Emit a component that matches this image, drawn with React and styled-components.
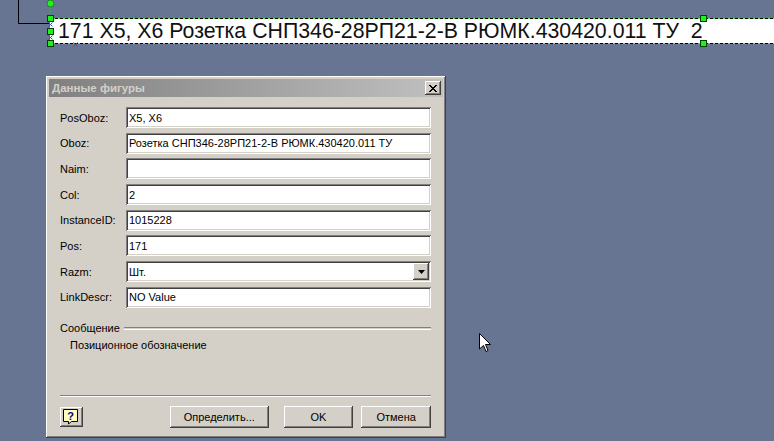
import React from 'react';
import styled, { createGlobalStyle } from 'styled-components';

const Global = createGlobalStyle`
  html, body {
    margin: 0;
    padding: 0;
    background: #687592;
    overflow: hidden;
  }
  #root {
    width: 774px;
    height: 441px;
  }
`;

const fields = [
  { label: 'PosOboz:', value: 'X5, X6' },
  { label: 'Oboz:', value: 'Розетка СНП346-28РП21-2-В РЮМК.430420.011 ТУ' },
  { label: 'Naim:', value: '' },
  { label: 'Col:', value: '2' },
  { label: 'InstanceID:', value: '1015228' },
  { label: 'Pos:', value: '171' },
  { label: 'Razm:', value: 'Шт.', combo: true },
  { label: 'LinkDescr:', value: 'NO Value' },
];

const raised = `
  box-shadow: inset -1px -1px #404040, inset 1px 1px #ffffff,
    inset -2px -2px #808080, inset 2px 2px #d4d0c8;
`;

const S = {
  Canvas: styled.div`
    position: relative;
    width: 774px;
    height: 441px;
    overflow: hidden;
    background: #687592;
    font-family: 'Liberation Sans', Arial, sans-serif;
  `,
  Marks: styled.svg`
    position: absolute;
    left: 0;
    top: 0;
    pointer-events: none;
  `,
  TextShape: styled.div`
    position: absolute;
    left: 50px;
    top: 18px;
    width: 740px;
    height: 26px;
    box-sizing: border-box;
    background: #ffffff;
    padding-left: 8px;
    font-family: 'Liberation Sans', Arial, sans-serif;
    font-size: 21.3px;
    line-height: 26px;
    color: #111;
    white-space: pre;
  `,
  Window: styled.div`
    position: absolute;
    left: 46px;
    top: 76px;
    width: 400px;
    height: 362px;
    box-sizing: border-box;
    padding: 3px;
    background: #d4d0c8;
    ${raised}
    display: flex;
    flex-direction: column;
    font-family: 'Liberation Sans', Tahoma, sans-serif;
    font-size: 11px;
    color: #000;
  `,
  TitleBar: styled.div`
    height: 18px;
    display: flex;
    align-items: center;
    justify-content: space-between;
    padding: 0 2px 0 3px;
    background: linear-gradient(90deg, #808080, #c0c0c0);
  `,
  Title: styled.span`
    color: #d4d0c8;
    font-weight: bold;
    font-size: 11.5px;
  `,
  CloseBtn: styled.div`
    width: 16px;
    height: 14px;
    background: #d4d0c8;
    ${raised}
    display: flex;
    align-items: center;
    justify-content: center;
  `,
  Body: styled.div`
    flex: 1;
    display: flex;
    flex-direction: column;
    padding: 10px 12px 7px 11px;
  `,
  Grid: styled.div`
    display: grid;
    grid-template-columns: 66px 1fr;
    row-gap: 4.7px;
    align-items: center;
  `,
  Label: styled.span`
    white-space: nowrap;
  `,
  Field: styled.div`
    position: relative;
    height: 21px;
    box-sizing: border-box;
    background: #ffffff;
    box-shadow: inset 1px 1px #808080, inset -1px -1px #ffffff,
      inset 2px 2px #404040, inset -2px -2px #d4d0c8;
    padding: 0 2px 0 3px;
    display: flex;
    align-items: center;
    justify-content: space-between;
  `,
  Arrow: styled.div`
    width: 16px;
    height: 17px;
    background: #d4d0c8;
    ${raised}
    display: flex;
    align-items: center;
    justify-content: center;
  `,
  Group: styled.div`
    margin-top: 14px;
    display: flex;
    align-items: center;
    gap: 4px;
    height: 13px;
    &::after {
      content: '';
      flex: 1;
      height: 1px;
      border-top: 1px solid #808080;
      border-bottom: 1px solid #ffffff;
    }
  `,
  Message: styled.div`
    margin-top: 4px;
    padding-left: 10px;
    height: 13px;
  `,
  Spacer: styled.div`
    flex: 1;
  `,
  Separator: styled.div`
    border-top: 1px solid #808080;
    border-bottom: 1px solid #ffffff;
  `,
  Footer: styled.div`
    margin-top: 9px;
    display: flex;
    align-items: flex-start;
  `,
  HelpBtn: styled.div`
    width: 23px;
    height: 20px;
    margin-top: 1px;
    background: #d4d0c8;
    ${raised}
    display: flex;
    align-items: center;
    justify-content: center;
  `,
  Button: styled.div`
    width: ${p => p.$w}px;
    height: 22px;
    margin-left: ${p => p.$ml}px;
    box-sizing: border-box;
    background: #d4d0c8;
    ${raised}
    display: flex;
    align-items: center;
    justify-content: center;
  `,
  Cursor: styled.svg`
    position: absolute;
    left: 479px;
    top: 333px;
  `,
};

const Handle = ({ x, y }) => (
  <rect x={x - 3} y={y - 3} width="6" height="6" fill="#22ee22" stroke="#004000" strokeWidth="1" />
);

const Cross = ({ x, y }) => (
  <g stroke="#3050c0" strokeWidth="1">
    <line x1={x - 2} y1={y - 2} x2={x + 2} y2={y + 2} />
    <line x1={x + 2} y1={y - 2} x2={x - 2} y2={y + 2} />
  </g>
);

const App = () => {
  return (
    <S.Canvas>
      <Global />
      <S.TextShape>{'171 X5, X6 Розетка СНП346-28РП21-2-В РЮМК.430420.011 ТУ  2'}</S.TextShape>
      <S.Marks width="774" height="441">
        <polyline points="18.5,0 18.5,23.5 50,23.5" fill="none" stroke="#000" strokeWidth="1" />
        <line x1="50" y1="7" x2="50" y2="15" stroke="#22cc22" strokeDasharray="2 2" />
        <circle cx="50.5" cy="3.5" r="3.5" fill="#22ee22" stroke="#208020" />
        <line x1="50" y1="18.5" x2="774" y2="18.5" stroke="#66dd66" />
        <line x1="50" y1="18.5" x2="774" y2="18.5" stroke="#000" strokeDasharray="3 2" />
        <line x1="50" y1="43.5" x2="774" y2="43.5" stroke="#66dd66" />
        <line x1="50" y1="43.5" x2="774" y2="43.5" stroke="#000" strokeDasharray="3 2" />
        <Cross x={50.5} y={24.5} />
        <Cross x={50.5} y={37.5} />
        <Cross x={75.5} y={44.5} />
        <Handle x={50.5} y={18.5} />
        <Handle x={50.5} y={31.5} />
        <Handle x={50.5} y={43.5} />
        <Handle x={703.5} y={18.5} />
        <Handle x={703.5} y={43.5} />
      </S.Marks>

      <S.Window>
        <S.TitleBar>
          <S.Title>Данные фигуры</S.Title>
          <S.CloseBtn>
            <svg width="8" height="7" viewBox="0 0 8 7">
              <path d="M0 0 L7 7 M1 0 L8 7 M7 0 L0 7 M8 0 L1 7" stroke="#000" strokeWidth="1" />
            </svg>
          </S.CloseBtn>
        </S.TitleBar>
        <S.Body>
          <S.Grid>
            {fields.map(f => (
              <React.Fragment key={f.label}>
                <S.Label>{f.label}</S.Label>
                <S.Field>
                  <span>{f.value}</span>
                  {f.combo && (
                    <S.Arrow>
                      <svg width="7" height="4" viewBox="0 0 7 4">
                        <path d="M0 0 H7 L3.5 4 Z" fill="#000" />
                      </svg>
                    </S.Arrow>
                  )}
                </S.Field>
              </React.Fragment>
            ))}
          </S.Grid>
          <S.Group>Сообщение</S.Group>
          <S.Message>Позиционное обозначение</S.Message>
          <S.Spacer />
          <S.Separator />
          <S.Footer>
            <S.HelpBtn>
              <svg width="16" height="16" viewBox="0 0 16 16">
                <path d="M0.5 0.5 H14.5 V12.5 H8.5 L5.5 15 V12.5 H0.5 Z" fill="#ffffc0" stroke="#000" />
                <text x="7.5" y="11" textAnchor="middle" fontFamily="Liberation Sans, Arial, sans-serif" fontWeight="bold" fontSize="11" fill="#000080">?</text>
              </svg>
            </S.HelpBtn>
            <S.Button $w={99} $ml={87}>Определить...</S.Button>
            <S.Button $w={70} $ml={15}>OK</S.Button>
            <S.Button $w={70} $ml={8}>Отмена</S.Button>
          </S.Footer>
        </S.Body>
      </S.Window>

      <S.Cursor width="13" height="21" viewBox="0 0 13 21">
        <path d="M0.5 0.5 V16 L4.5 12.5 L7 18.5 L9 17.5 L6.5 11.5 H11.5 Z" fill="#fff" stroke="#000" strokeLinejoin="round" />
      </S.Cursor>
    </S.Canvas>
  );
};

export default App;
